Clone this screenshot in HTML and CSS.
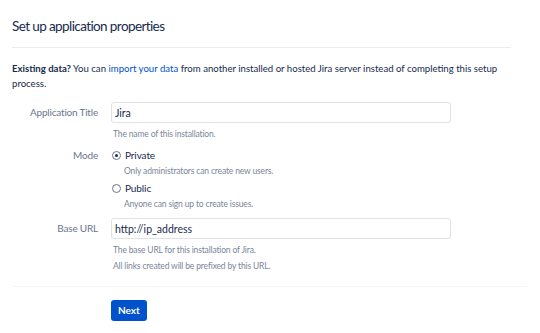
FILE: index.html
```html
<!DOCTYPE html>
<html lang="en">
<head>
    <meta charset="UTF-8">
    <title>Set up application properties</title>
    <link rel="stylesheet" href="styles.css">
</head>
<body>
    <div class="setup-page">
        <h1>Set up application properties</h1>
        <p class="intro"><strong>Existing data?</strong> You can <a href="#">import your data</a> from another installed or hosted Jira server instead of completing this setup<br>process.</p>
        <form class="setup-form">
            <div class="field-row">
                <label for="title">Application Title</label>
                <div class="field">
                    <input type="text" id="title" class="text-input" value="Jira">
                    <div class="help">The name of this installation.</div>
                </div>
            </div>
            <div class="field-row mode-row">
                <label class="mode-label">Mode</label>
                <div class="field">
                    <div class="radio"><span class="dot checked"></span>Private</div>
                    <div class="help radio-help">Only administrators can create new users.</div>
                    <div class="radio"><span class="dot"></span>Public</div>
                    <div class="help radio-help">Anyone can sign up to create issues.</div>
                </div>
            </div>
            <div class="field-row url-row">
                <label for="url">Base URL</label>
                <div class="field">
                    <input type="text" id="url" class="text-input" value="http://ip_address">
                    <div class="help">The base URL for this installation of Jira.</div>
                    <div class="help">All links created will be prefixed by this URL.</div>
                </div>
            </div>
            <div class="buttons">
                <button type="button" class="next-button">Next</button>
            </div>
        </form>
    </div>
</body>
</html>
```

FILE: styles.css
```css
body {
    margin: 0;
    font-family: Lato, "Noto Sans", sans-serif;
    color: #172b4d;
    background-color: #ffffff;
}
.setup-page {
    padding: 0 12px;
}
.setup-page h1 {
    margin: 0;
    padding-top: 16px;
    padding-bottom: 10px;
    font-size: 13.5px;
    font-weight: 400;
    letter-spacing: -0.6px;
    line-height: 21px;
    width: 499px;
    border-bottom: 1px solid #ebecf0;
}
.intro {
    margin: 13px 0 0;
    font-size: 9.6px;
    line-height: 15px;
    color: #172b4d;
}
.intro a {
    color: #0052cc;
    text-decoration: none;
}
.setup-form {
    margin-top: 11px;
}
.field-row {
    display: flex;
}
.mode-row {
    margin-top: 5px;
}
.url-row {
    margin-top: 6px;
}
.field-row label {
    width: 86px;
    flex-shrink: 0;
    margin-right: 13px;
    text-align: right;
    font-size: 10px;
    letter-spacing: -0.2px;
    line-height: 21px;
    color: #6b778c;
}
.field-row .mode-label {
    line-height: 16px;
}
.field {
    flex: 1;
}
.text-input {
    display: block;
    box-sizing: border-box;
    width: 340px;
    height: 21px;
    margin: 0;
    padding: 0 3px;
    border: 1px solid #dfe1e6;
    border-radius: 3px;
    font-family: Lato, "Noto Sans", sans-serif;
    font-size: 10.5px;
    color: #172b4d;
}
.help {
    padding-left: 2px;
    font-size: 8.5px;
    letter-spacing: -0.15px;
    line-height: 16px;
    color: #7a869a;
}
.text-input + .help {
    margin-top: 3px;
}
.radio-help {
    padding-left: 13px;
}
.radio {
    display: flex;
    align-items: center;
    height: 16px;
    padding-left: 1px;
    font-size: 10px;
    letter-spacing: -0.1px;
}
.radio-help + .radio {
    margin-top: 1px;
}
.dot {
    box-sizing: border-box;
    width: 9px;
    height: 9px;
    margin-right: 4px;
    border: 1px solid #6b778c;
    border-radius: 50%;
    position: relative;
}
.dot.checked::after {
    content: "";
    position: absolute;
    left: 2px;
    top: 2px;
    width: 3px;
    height: 3px;
    border-radius: 50%;
    background-color: #172b4d;
}
.buttons {
    margin-top: 12px;
    padding-top: 11px;
    padding-left: 99px;
    border-top: 1px solid #f4f5f7;
    width: 416px;
    padding-bottom: 14px;
}
.next-button {
    height: 21px;
    padding: 0 7px;
    border: none;
    border-radius: 3px;
    background-color: #0052cc;
    color: #ffffff;
    font-family: Lato, "Noto Sans", sans-serif;
    font-size: 10px;
    font-weight: 700;
    cursor: pointer;
}
```
